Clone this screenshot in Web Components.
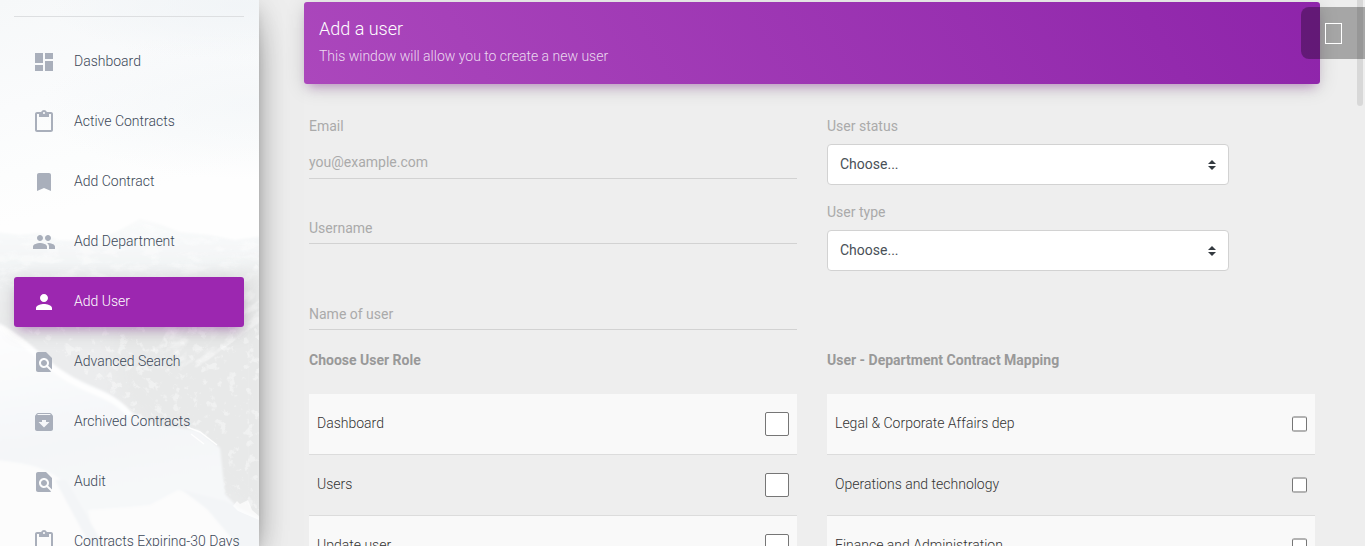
<!DOCTYPE html>
<html lang="en">
<head>
<meta charset="utf-8">
<title>Add a user</title>
<style>
html,body{margin:0;height:100%;overflow:hidden;background:#eee;font-family:Roboto,"Liberation Sans",sans-serif;font-size:14px;font-weight:300}
</style>
</head>
<body>
<user-admin-page></user-admin-page>
<script>
const define = (name, html) => customElements.define(name, class extends HTMLElement {
  constructor() {
    super();
    const t = document.createElement('template');
    t.innerHTML = typeof html === 'function' ? html(this) : html;
    this.attachShadow({ mode: 'open' }).append(t.content.cloneNode(true));
  }
});

const icons = {
  dashboard: 'M3 13h8V3H3v10zm0 8h8v-6H3v6zm10 0h8V11h-8v10zm0-18v6h8V3h-8z',
  clipboard: 'M19 2h-4.18C14.4.84 13.3 0 12 0c-1.3 0-2.4.84-2.82 2H5c-1.1 0-2 .9-2 2v16c0 1.1.9 2 2 2h14c1.1 0 2-.9 2-2V4c0-1.1-.9-2-2-2zm-7 0c.55 0 1 .45 1 1s-.45 1-1 1-1-.45-1-1 .45-1 1-1zm7 18H5V4h2v3h10V4h2v16z',
  bookmark: 'M17 3H7c-1.1 0-1.99.9-1.99 2L5 21l7-3 7 3V5c0-1.1-.9-2-2-2z',
  group: 'M16 11c1.66 0 2.99-1.34 2.99-3S17.66 5 16 5c-1.66 0-3 1.34-3 3s1.34 3 3 3zm-8 0c1.66 0 2.99-1.34 2.99-3S9.66 5 8 5C6.34 5 5 6.34 5 8s1.34 3 3 3zm0 2c-2.33 0-7 1.17-7 3.5V19h14v-2.5c0-2.33-4.67-3.5-7-3.5zm8 0c-.29 0-.62.02-.97.05 1.16.84 1.97 1.97 1.97 3.45V19h6v-2.5c0-2.33-4.67-3.5-7-3.5z',
  person: 'M12 12c2.21 0 4-1.79 4-4s-1.79-4-4-4-4 1.79-4 4 1.79 4 4 4zm0 2c-2.67 0-8 1.34-8 4v2h16v-2c0-2.66-5.33-4-8-4z',
  find: 'M20 19.59V8l-6-6H6c-1.1 0-1.99.9-1.99 2L4 20c0 1.1.89 2 1.99 2H18c.45 0 .85-.15 1.19-.4l-4.43-4.43c-.8.52-1.74.83-2.76.83-2.76 0-5-2.24-5-5s2.24-5 5-5 5 2.24 5 5c0 1.02-.31 1.96-.83 2.75L20 19.59zM9 13c0 1.66 1.34 3 3 3s3-1.34 3-3-1.34-3-3-3-3 1.34-3 3z',
  archive: 'M20.54 5.23l-1.39-1.68C18.88 3.21 18.47 3 18 3H6c-.47 0-.88.21-1.16.55L3.46 5.23C3.17 5.57 3 6.02 3 6.5V19c0 1.1.9 2 2 2h14c1.1 0 2-.9 2-2V6.5c0-.48-.17-.93-.46-1.27zM12 17.5L6.5 12H10v-2h4v2h3.500L12 17.500zM5.120 5l.810-1h12l.940 1H5.120z'
};

define('nav-item', el => `<style>
:host{display:flex;align-items:center;box-sizing:border-box;height:50px;padding-left:18px;border-radius:3px;color:#3c4858;line-height:30px;white-space:nowrap}
:host([active]){background:#9c27b0;color:#fff;box-shadow:0 4px 20px 0 rgba(0,0,0,.14),0 7px 10px -5px rgba(156,39,176,.4)}
svg{width:24px;height:24px;fill:#a9afbb;margin-right:18px;flex:none}
:host([active]) svg{fill:#fff}
span{margin-top:-2px}
</style><svg viewBox="0 0 24 24"><path d="${icons[el.getAttribute('icon')]}"/></svg><span><slot></slot></span>`);

define('mountain-backdrop', `<style>:host{display:block}svg{display:block}</style>
<svg width="259" height="546" viewBox="0 0 259 546">
<defs>
<linearGradient id="sky" x2=".12" y2="1"><stop offset="0" stop-color="#f6f8f9"/><stop offset=".2" stop-color="#fafbfc"/><stop offset=".32" stop-color="#fcfdfd"/><stop offset=".41" stop-color="#fefefe"/></linearGradient>
<radialGradient id="haze"><stop offset="0" stop-color="#eff3f6"/><stop offset=".5" stop-color="#eff3f6" stop-opacity=".6"/><stop offset="1" stop-color="#eff3f6" stop-opacity="0"/></radialGradient>
<linearGradient id="ridge" gradientUnits="userSpaceOnUse" x1="0" y1="218" x2="0" y2="330"><stop offset="0" stop-color="#fafbfb"/><stop offset=".3" stop-color="#f5f7f8"/><stop offset=".55" stop-color="#eff1f2"/><stop offset="1" stop-color="#ebeced"/></linearGradient>
<linearGradient id="snow" gradientUnits="userSpaceOnUse" x1="20" y1="330" x2="50" y2="500"><stop offset="0" stop-color="#fdfdfe"/><stop offset=".3" stop-color="#f9fafb"/><stop offset=".7" stop-color="#f4f6f8"/><stop offset="1" stop-color="#f6f8f9"/></linearGradient>
<filter id="rough" x="0" y="0" width="1" height="1" color-interpolation-filters="sRGB"><feTurbulence type="fractalNoise" baseFrequency=".05 .11" numOctaves="5" seed="8"/><feColorMatrix values="0 0 0 0 1  0 0 0 0 1  0 0 0 0 1  4 0 0 0 -1.9"/><feComposite in2="SourceGraphic" operator="in"/></filter>
<filter id="trees" x="0" y="0" width="1" height="1" color-interpolation-filters="sRGB"><feTurbulence type="fractalNoise" baseFrequency=".11" numOctaves="5" seed="3"/><feColorMatrix values="0 0 0 0 1  0 0 0 0 1  0 0 0 0 1  8 0 0 0 -4.7"/><feComposite in2="SourceGraphic" operator="in"/></filter>
<filter id="soft"><feGaussianBlur stdDeviation="1.3"/></filter>
<filter id="softer" x="-.2" y="-.2" width="1.4" height="1.4"><feGaussianBlur stdDeviation="9"/></filter>
</defs>
<rect width="259" height="546" fill="url(#sky)"/>
<ellipse cx="250" cy="105" rx="210" ry="75" fill="url(#haze)" opacity=".5"/>
<ellipse cx="240" cy="5" rx="190" ry="55" fill="url(#haze)" opacity=".75"/>
<path d="M-4 232 20 235 38 233 58 240 92 241 118 231 140 219 160 224 180 232 210 235 235 240 263 236V550H-4z" fill="url(#ridge)" filter="url(#soft)"/>
<path d="M0 236 38 236 92 244 140 222 180 235 259 240V290H0z" filter="url(#rough)" opacity=".42"/>
<path d="M150 290 270 265V530L214 490 120 400 110 340z" fill="#e8e9e9" filter="url(#softer)"/>
<path d="M20 325H259V520H230L120 400z" filter="url(#trees)" opacity=".38"/>
<g transform="rotate(-35 210 320)"><path d="M140 300 H280 V350 L160 352z" filter="url(#rough)" opacity=".45"/></g>
<g filter="url(#soft)">
<path d="M-4 322C25 335 44 360 70 375S112 390 130 411L160 426 198 430 220 448 225 494 240 510 263 520V560H-4z" fill="url(#snow)"/>
<path d="M-4 460C25 463 42 466 60 479L92 530 88 510 130 507 150 505 178 490 190 494 207 509 263 546V560H-4z" fill="#fcfcfc"/>
<path d="M182 490 225 501 263 520V560H250L207 509z" fill="#f3f5f7"/>
<path d="M55 480 66 480 112 560H98z" fill="#f3f5f7"/>
<path d="M0 327C25 340 44 365 70 380S112 394 130 415" fill="none" stroke="#fff" stroke-width="6" opacity=".8"/>
</g>
<path d="M187 427 200 432 217 445M191 434 204 444" fill="none" stroke="#fff" stroke-width="1.500" opacity=".9"/>
<path d="M233 506 237 501 240 504 248 500 252 510 259 516V520L238 511z" fill="#fff" opacity=".7"/>
</svg>`);

define('side-bar', `<style>
:host{display:block;position:relative;width:259px;height:100%;flex:none;z-index:2;box-shadow:0 16px 38px -12px rgba(0,0,0,.56),0 4px 25px 0 rgba(0,0,0,.12),0 8px 10px -5px rgba(0,0,0,.2)}
mountain-backdrop{position:absolute;inset:0;z-index:-1}
.wrap{height:100%;overflow:hidden;padding:16px 15px 0 14px;box-sizing:border-box}
hr{border:0;height:1px;margin:0 0 20px;background:#dddfe1}
nav{display:flex;flex-direction:column;gap:10px}
nav-item{flex:none}
</style><mountain-backdrop></mountain-backdrop>
<div class="wrap"><hr><nav>
<nav-item icon="dashboard">Dashboard</nav-item>
<nav-item icon="clipboard">Active Contracts</nav-item>
<nav-item icon="bookmark">Add Contract</nav-item>
<nav-item icon="group">Add Department</nav-item>
<nav-item icon="person" active>Add User</nav-item>
<nav-item icon="find">Advanced Search</nav-item>
<nav-item icon="archive">Archived Contracts</nav-item>
<nav-item icon="find">Audit</nav-item>
<nav-item icon="clipboard">Contracts Expiring-30 Days</nav-item>
</nav></div>`);

define('card-header', `<style>
:host{display:block;box-sizing:border-box;height:82px;padding:14px 15px;border-radius:3px;background:linear-gradient(60deg,#ab47bc,#8e24aa);color:#fff;box-shadow:0 4px 20px 0 rgba(0,0,0,.14),0 7px 10px -5px rgba(156,39,176,.4)}
h4{margin:0;font-size:18px;line-height:25px;font-weight:300}
p{margin:5px 0 0;line-height:21px;color:rgba(255,255,255,.8)}
</style><h4><slot></slot></h4><p><slot name="note"></slot></p>`);

define('line-field', `<style>
:host{display:flex;align-items:flex-end;box-sizing:border-box;border-bottom:1px solid #d2d2d2;color:#aaa;font-weight:400;line-height:20px;padding-bottom:5px}
</style><slot></slot>`);

define('select-field', `<style>
:host{display:block;width:402px;font-weight:400}
label{display:block;color:#aaa;line-height:20px;margin-bottom:8px}
.box{display:flex;align-items:center;justify-content:space-between;box-sizing:border-box;height:41px;border:1px solid #d2d2d2;border-radius:4px;background:#fff;color:#495057;padding:0 12px}
.box span{margin-top:-1px}
svg{width:8px;height:10px;fill:#343a40}
</style><label><slot></slot></label><div class="box"><span>Choose...</span><svg viewBox="0 0 4 5"><path d="M2 0L0 2h4zm0 5L0 3h4z"/></svg></div>`);

define('check-row', `<style>
:host{display:flex;align-items:center;justify-content:space-between;box-sizing:border-box;height:61px;padding:0 8px;border-bottom:1px solid #dcdcdc;color:#333}
:host([shade]){background:#f9f9f9}
span{margin-top:-2px}
i{box-sizing:border-box;width:15px;height:16px;border:solid;border-width:2px 1px;border-color:#b3b3b3 #767676;border-radius:2.5px;background:#fff}
:host([large]) i{width:24px;height:24px;border:1px solid #767676;border-radius:2px}
</style><span><slot></slot></span><i></i>`);

define('check-list', `<style>
:host{display:block}
h5{margin:0 0 24px;font-size:14px;line-height:20px;font-weight:700;color:#999}
</style><h5><slot name="title"></slot></h5><slot></slot>`);

define('settings-tab', `<style>
:host{position:absolute;right:0;top:7px;width:64px;height:52px;box-sizing:border-box;padding:16px 0 0 24px;background:rgba(0,0,0,.3);border-radius:8px 0 0 8px;z-index:5}
i{display:block;box-sizing:border-box;width:17px;height:21px;border:1px solid #fff}
</style><i></i>`);

define('scroll-thumb', `<style>
:host{position:absolute;right:2px;top:-8px;width:6px;height:114px;border-radius:6px;background:rgba(0,0,0,.09);z-index:6}
</style>`);

define('user-admin-page', `<style>
:host{display:flex;position:relative;width:100%;height:100%;overflow:hidden;background:#eee}
main{flex:1;padding:2px 45px 0;min-width:0}
.cols{display:grid;grid-template-columns:1fr 1fr;column-gap:30px;padding:32px 5px 0}
.inputs{height:234px}
.label{color:#aaa;font-weight:400;line-height:20px}
.email{height:43px;padding-bottom:6px}
.user{height:65px}
.name{height:86px}
.status{margin-bottom:17px}
</style>
<side-bar></side-bar>
<main>
<card-header>Add a user<span slot="note">This window will allow you to create a new user</span></card-header>
<div class="cols">
<section class="inputs"><div class="label">Email</div>
<line-field class="email">you@example.com</line-field><line-field class="user">Username</line-field><line-field class="name">Name of user</line-field></section>
<section><select-field class="status">User status</select-field><select-field>User type</select-field></section>
<check-list><span slot="title">Choose User Role</span><check-row shade large>Dashboard</check-row><check-row large>Users</check-row><check-row shade large>Update user</check-row></check-list>
<check-list><span slot="title">User - Department Contract Mapping</span><check-row shade>Legal &amp; Corporate Affairs dep</check-row><check-row>Operations and technology</check-row><check-row shade>Finance and Administration</check-row></check-list>
</div>
</main>
<settings-tab></settings-tab><scroll-thumb></scroll-thumb>`);
</script>
</body>
</html>
